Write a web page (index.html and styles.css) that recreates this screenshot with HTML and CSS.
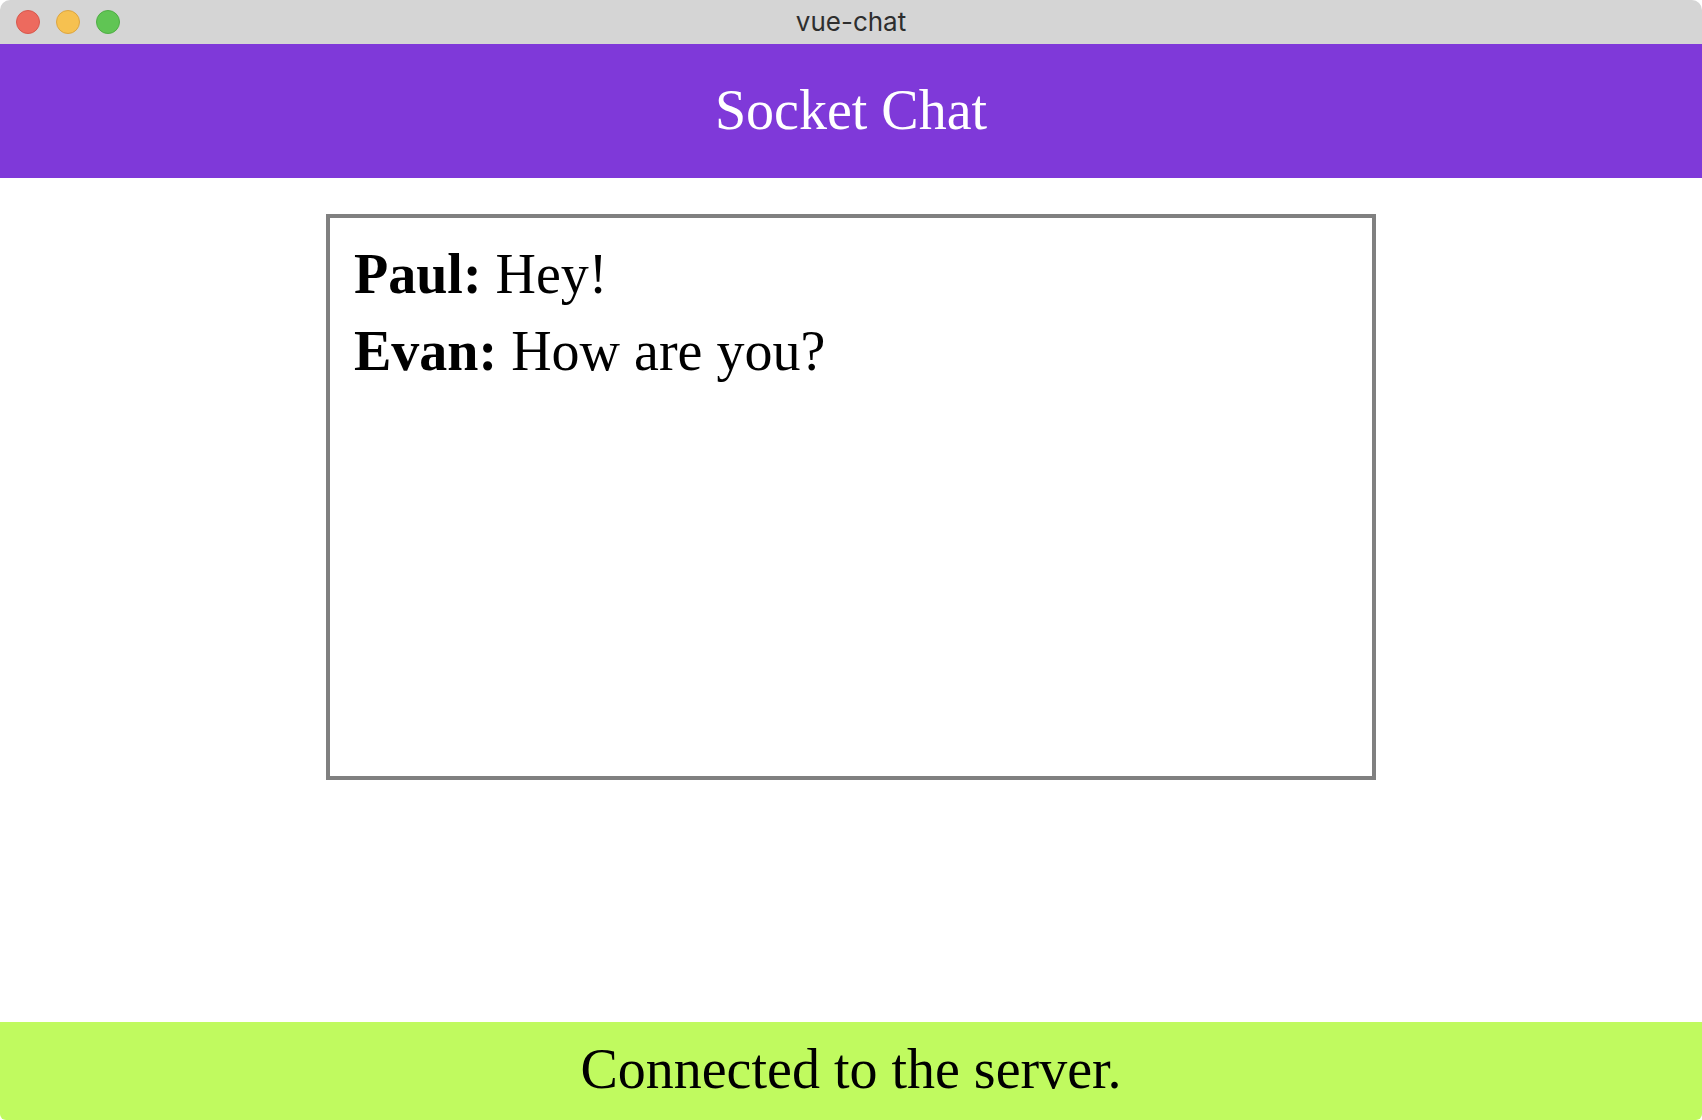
FILE: index.html
```html
<!DOCTYPE html>
<html lang="en">
<head>
<meta charset="utf-8">
<title>vue-chat</title>
<link rel="stylesheet" href="styles.css">
</head>
<body>
<div class="window">
  <div class="titlebar">
    <div class="lights">
      <span class="light red"></span>
      <span class="light yellow"></span>
      <span class="light green"></span>
    </div>
    <div class="wintitle">vue-chat</div>
    <div></div>
  </div>
  <header class="app-header">Socket Chat</header>
  <main class="app-main">
    <div class="messages">
      <div class="message"><strong>Paul:</strong> Hey!</div>
      <div class="message"><strong>Evan:</strong> How are you?</div>
    </div>
  </main>
  <footer class="status">Connected to the server.</footer>
</div>
</body>
</html>
```

FILE: styles.css
```css
html, body {
  margin: 0;
  padding: 0;
  background: #ffffff;
}

.window {
  width: 1702px;
  height: 1120px;
  display: flex;
  flex-direction: column;
  border-radius: 10px 10px 6px 6px;
  overflow: hidden;
  background: #ffffff;
}

.titlebar {
  height: 44px;
  flex: 0 0 44px;
  background: #d5d5d5;
  display: grid;
  grid-template-columns: 1fr auto 1fr;
  align-items: center;
}

.lights {
  display: flex;
  gap: 16px;
  padding-left: 16px;
  align-items: center;
}

.light {
  width: 24px;
  height: 24px;
  border-radius: 50%;
  box-sizing: border-box;
}

.light.red { background: #ed6a5e; border: 1px solid #d7584d; }
.light.yellow { background: #f6c150; border: 1px solid #dca541; }
.light.green { background: #60c554; border: 1px solid #4fad45; }

.wintitle {
  font-family: Inter, "Liberation Sans", sans-serif;
  font-size: 26px;
  line-height: 44px;
  color: #2e2e2e;
}

.app-header {
  flex: 0 0 134px;
  height: 134px;
  box-sizing: border-box;
  background: #7f39d9;
  color: #ffffff;
  font-family: "Liberation Serif", "Times New Roman", serif;
  font-size: 56px;
  line-height: 132px;
  padding-bottom: 2px;
  text-align: center;
}

.app-main {
  flex: 1 1 auto;
  display: flex;
  justify-content: center;
  align-items: flex-start;
  padding-top: 36px;
}

.messages {
  width: 1050px;
  height: 566px;
  box-sizing: border-box;
  border: 4px solid #808080;
  padding: 18px 24px;
  font-family: "Liberation Serif", "Times New Roman", serif;
  font-size: 56px;
  line-height: 77px;
  color: #000000;
}

.message strong {
  font-weight: bold;
}

.status {
  flex: 0 0 98px;
  height: 98px;
  box-sizing: border-box;
  background: #c0fa5f;
  color: #000000;
  font-family: "Liberation Serif", "Times New Roman", serif;
  font-size: 56px;
  line-height: 94px;
  padding-bottom: 4px;
  text-align: center;
}
```
